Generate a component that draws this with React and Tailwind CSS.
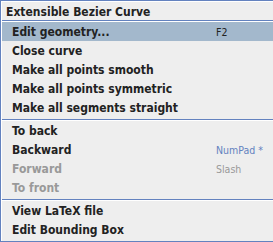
const items = [
  { label: 'Edit geometry...', key: 'F2', selected: true },
  { label: 'Close curve' },
  { label: 'Make all points smooth' },
  { label: 'Make all points symmetric' },
  { label: 'Make all segments straight' },
  'sep',
  { label: 'To back' },
  { label: 'Backward', key: 'NumPad *', keyBlue: true },
  { label: 'Forward', key: 'Slash', disabled: true },
  { label: 'To front', disabled: true },
  'sep',
  { label: 'View LaTeX file' },
  { label: 'Edit Bounding Box' },
]

function Separator() {
  return (
    <div className="pt-[2px]">
      <div className="h-px bg-[#6382bf]" />
      <div className="h-px bg-white" />
    </div>
  )
}

function MenuItem({ label, shortcut, selected, disabled, keyBlue }) {
  return (
    <div
      className={`flex h-[19px] items-center pl-[10px] ${selected ? 'bg-[#a3b8cc]' : ''}`}
    >
      <span
        className={`w-[204px] shrink-0 pt-px text-[12px] font-bold ${disabled ? 'text-[#999999]' : 'text-[#222222]'}`}
      >
        {label}
      </span>
      {shortcut && (
        <span
          className={`whitespace-nowrap pt-px text-[10.5px] ${keyBlue ? 'text-[#6382bf]' : disabled ? 'text-[#999999]' : 'text-[#222222]'}`}
        >
          {shortcut}
        </span>
      )}
    </div>
  )
}

export default function App() {
  return (
    <div
      className="w-[273px] h-[242px] overflow-hidden bg-[#eeeeee] border-l border-t border-b border-[#6382bf] leading-none"
      style={{ fontFamily: '"DejaVu Sans Condensed", "DejaVu Sans", sans-serif' }}
    >
      <div className="border-l border-t border-white h-full">
        {/* Title */}
        <div className="flex h-[18px] items-center pl-[4px] pt-px text-[12px] font-bold text-[#222222]">
          Extensible Bezier Curve
        </div>
        <div className="h-px bg-[#6382bf]" />
        <div className="h-px bg-white" />

        {items.map((it, i) =>
          it === 'sep' ? (
            <Separator key={i} />
          ) : (
            <MenuItem
              key={i}
              label={it.label}
              shortcut={it.key}
              selected={it.selected}
              disabled={it.disabled}
              keyBlue={it.keyBlue}
            />
          )
        )}
      </div>
    </div>
  )
}
